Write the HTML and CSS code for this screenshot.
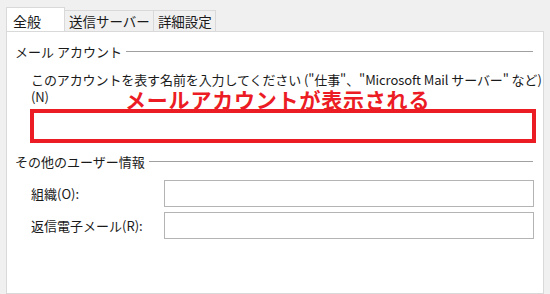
FILE: index.html
```html
<!DOCTYPE html>
<html lang="ja">
<head>
  <meta charset="UTF-8">
  <title>アカウント設定</title>
  <link rel="stylesheet" href="styles.css">
</head>
<body>
  <div class="tabs">
    <div class="tab active">全般</div>
    <div class="tab">送信サーバー</div>
    <div class="tab">詳細設定</div>
  </div>

  <div class="panel">
    <div class="group-title"><span>メール アカウント</span></div>
    <div class="indent">
      <p class="desc">このアカウントを表す名前を入力してください ("仕事"、"Microsoft Mail サーバー" など)<br>(N)</p>
      <div class="note">メールアカウントが表示される</div>
      <div class="account-box"></div>
    </div>

    <div class="group-title second"><span>その他のユーザー情報</span></div>
    <div class="indent fields">
      <label class="field-label">組織(O):</label>
      <div class="field"></div>
      <label class="field-label">返信電子メール(R):</label>
      <div class="field"></div>
    </div>
  </div>
</body>
</html>
```

FILE: styles.css
```css
* {
  box-sizing: border-box;
}

body {
  margin: 0;
  background-color: #f0f0f0;
  font-family: 'Noto Sans CJK JP', 'Noto Sans', sans-serif;
  font-size: 13px;
  color: #1a1a1a;
  height: 294px;
  overflow: hidden;
}

.tabs {
  display: flex;
  align-items: flex-end;
  height: 31px;
  padding-left: 6px;
}

.tab {
  height: 21px;
  line-height: 20px;
  padding: 0 3px 0 4px;
  border: 1px solid #d9d9d9;
  border-bottom: none;
  border-left: none;
  background-color: #f0f0f0;
  font-size: 13.5px;
}

.tab.active {
  height: 25px;
  line-height: 26px;
  width: 59px;
  padding-left: 6px;
  border-left: 1px solid #d9d9d9;
  background-color: #fff;
  font-size: 14px;
  position: relative;
  top: 1px;
}

.panel {
  position: relative;
  margin-left: 6px;
  width: 538px;
  height: 263px;
  background-color: #fff;
  border: 1px solid #d9d9d9;
  padding: 11px 10px 0 8px;
}

.group-title {
  display: flex;
  align-items: center;
  gap: 4px;
  line-height: 17px;
}

.group-title::after {
  content: '';
  flex: 1;
  border-top: 1px solid #a0a0a0;
}

.group-title.second {
  margin-top: 10px;
}

.indent {
  padding-left: 16px;
}

.desc {
  margin: 11px 0 0;
  line-height: 17px;
  white-space: nowrap;
  letter-spacing: -0.1px;
}

/* annotation laid over the dialog */
.note {
  position: absolute;
  left: 118px;
  top: 57px;
  color: #ec1c24;
  font-weight: bold;
  font-size: 21px;
  letter-spacing: 0.8px;
  line-height: 20px;
}

.account-box {
  margin-top: 4px;
  margin-left: -1px;
  margin-right: -3px;
  height: 34px;
  border: 4px solid #ec1c24;
}

.fields {
  display: grid;
  grid-template-columns: 133px 1fr;
  row-gap: 5px;
  margin-top: 10px;
  align-items: center;
}

.field-label {
  line-height: 17px;
}

.field {
  height: 27px;
  border: 1px solid #b4b4b4;
  background-color: #fff;
  margin-right: -1px;
}
```
